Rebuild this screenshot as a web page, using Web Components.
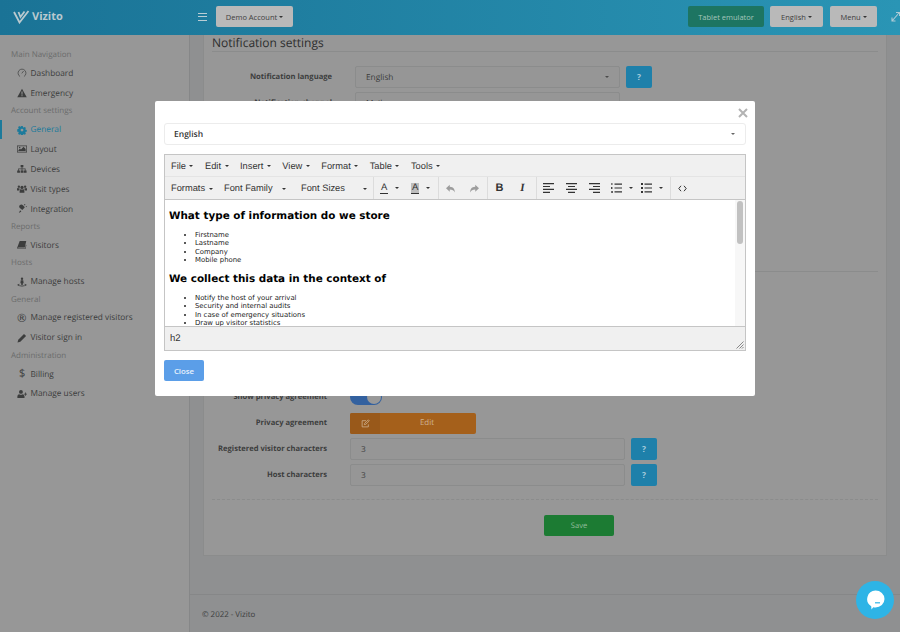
<!DOCTYPE html>
<html lang="en">
<head>
<meta charset="utf-8">
<title>Vizito - Notification settings</title>
<style>
  html, body { margin: 0; height: 100%; overflow: hidden; background: #8f9091; }
  body { font-family: "Open Sans", "Liberation Sans", sans-serif; text-rendering: geometricPrecision; }
</style>
</head>
<body>
<vz-app>
  <vz-topbar slot="top"></vz-topbar>
  <vz-sidebar slot="side">
    <vz-nav-head>Main Navigation</vz-nav-head>
    <vz-nav-item icon="gauge">Dashboard</vz-nav-item>
    <vz-nav-item icon="warning">Emergency</vz-nav-item>
    <vz-nav-head>Account settings</vz-nav-head>
    <vz-nav-item icon="gear" active>General</vz-nav-item>
    <vz-nav-item icon="image">Layout</vz-nav-item>
    <vz-nav-item icon="sitemap">Devices</vz-nav-item>
    <vz-nav-item icon="users">Visit types</vz-nav-item>
    <vz-nav-item icon="plug">Integration</vz-nav-item>
    <vz-nav-head>Reports</vz-nav-head>
    <vz-nav-item icon="book">Visitors</vz-nav-item>
    <vz-nav-head>Hosts</vz-nav-head>
    <vz-nav-item icon="street">Manage hosts</vz-nav-item>
    <vz-nav-head>General</vz-nav-head>
    <vz-nav-item icon="registered">Manage registered visitors</vz-nav-item>
    <vz-nav-item icon="pencil">Visitor sign in</vz-nav-item>
    <vz-nav-head>Administration</vz-nav-head>
    <vz-nav-item icon="dollar">Billing</vz-nav-item>
    <vz-nav-item icon="userplus">Manage users</vz-nav-item>
  </vz-sidebar>
  <vz-settings slot="main"></vz-settings>
</vz-app>

<vz-modal>
  <vz-select slot="head">English</vz-select>
  <vz-editor></vz-editor>
</vz-modal>
<vz-chat></vz-chat>

<script>
// fontawesome-ish glyphs, all on a 16 box
const ICONS = {
  gauge: '<path d="M4.9 13.6A6.3 6.3 0 1 1 11.1 13.6" fill="none" stroke="currentColor" stroke-width="1.1"/><path d="M7.6 8.6 10.6 4.8" fill="none" stroke="currentColor" stroke-width="1.1"/>',
  warning: '<path fill-rule="evenodd" d="M8 1.2 15.6 14.6H.4zM7.1 5.6l.2 5h1.4l.2-5zM7.1 11.4v1.7h1.8v-1.7z"/>',
  gear: '<path fill-rule="evenodd" d="M6.6 1h2.8l.4 2 1.4.6 1.8-1.1 2 2-1.1 1.8.6 1.4 2 .4v2.8l-2 .4-.6 1.4 1.1 1.8-2 2-1.8-1.1-1.4.6-.4 2H6.6l-.4-2-1.4-.6-1.8 1.1-2-2 1.1-1.8-.6-1.4-2-.4V6.700l2-.4.6-1.400-1.100-1.800 2-2 1.800 1.100 1.400-.6zM8 5.600a2.500 2.500 0 1 0 0 5 2.500 2.500 0 0 0 0-5z" transform="translate(.8 .8) scale(.9)"/>',
  image: '<path fill-rule="evenodd" d="M0 2.500h16v11H0zM1.100 3.600v8.800h13.800V3.600z"/><path d="M2.200 11.300V9.800l2.600-2.600 1.500 1.500 4.200-4.200 3.300 3.300v3.500z"/><circle cx="4.300" cy="5.600" r="1.200"/>',
  sitemap: '<path d="M5.800 1.500h4.400v3.600H8.600v2.200h5.100v3h1.600v3.700h-4.400v-3.700h1.600V8.500H8.600v1.800h1.600v3.700H5.800v-3.700h1.600V8.500H3.100v1.800h1.600v3.700H.3v-3.700h1.600v-3h5.500V5.100H5.800z"/>',
  users: '<circle cx="8" cy="5.400" r="2.600"/><circle cx="3" cy="4.200" r="1.900"/><circle cx="13" cy="4.200" r="1.900"/><path d="M4.200 14v-3.200c0-1.800 1.100-2.600 2-2.600.5.3 1.100.5 1.800.5s1.300-.2 1.800-.5c.9 0 2 .8 2 2.600V14z"/><path d="M0 10.400V8c0-1.100.6-1.800 1.500-1.800.4.300.9.500 1.500.500h.6c.2.700.6 1.300 1 1.700-1 .4-1.500 1.300-1.500 2zM16 10.400V8c0-1.100-.6-1.800-1.500-1.800-.4.300-.9.500-1.500.500h-.6c-.2.700-.6 1.300-1 1.700 1 .4 1.500 1.300 1.500 2z"/>',
  plug: '<path d="M4.500 6.500a3 3 0 0 1 5-4.500L12.500 5l-4 4.500z"/><path d="M3 14.500 5 10l2 2z"/><path d="M11 1l1.500-1 1 1-1 1.500zM14 4l1-1 1 1-1.500 1z"/>',
  book: '<path d="M4.300 1.500h10.500l-2.400 10.300H2.500c-.6 0-1 .3-1 .8s.4.900 1 .9h10.400l1.300-6 .9.500-1.500 6.500H2.300C1 14.500.1 13.500.4 12.100z"/>',
  street: '<circle cx="8" cy="2.700" r="1.900"/><path d="M6 5.200h4l.6 4.700H9.400l-.3 3.400H6.900l-.3-3.400H5.400z"/><path d="M4 10.900c-2 .4-3.300 1.100-3.300 2 0 1.300 3.300 2.100 7.300 2.100s7.300-.8 7.300-2.100c0-.9-1.300-1.600-3.300-2v1.100c1 .2 1.600.5 1.600.9 0 .6-2.500 1-5.600 1s-5.600-.4-5.600-1c0-.4.600-.7 1.600-.9z"/>',
  pencil: '<path d="M11.200 1.500 14.500 4.800 5.300 14 .8 15.200 2 10.700z"/>',
  userplus: '<circle cx="6.300" cy="4.600" r="3.100"/><path d="M.6 14.300v-2.200c0-2.200 1.200-3.800 2.900-3.800.8.600 1.800.900 2.800.900s2-.3 2.800-.9c1.700 0 2.900 1.600 2.900 3.800v2.200z"/><path d="M13 5.400h1.300v2h1.700v1.300h-1.700v2H13v-2h-1.900V7.400H13z"/>',
};

class VzApp extends HTMLElement {
  connectedCallback() {
    this.attachShadow({ mode: 'open' }).innerHTML = `
      <style>
        :host { display: grid; grid-template-columns: 190px 1fr; grid-template-rows: 35px 1fr; height: 632px; overflow: hidden; }
        .top { grid-column: 1 / 3; }
        .side { border-right: 1px solid #868788; overflow: hidden; }
        .main { overflow: hidden; }
      </style>
      <div class="top"><slot name="top"></slot></div>
      <div class="side"><slot name="side"></slot></div>
      <div class="main"><slot name="main"></slot></div>
    `;
  }
}

class VzTopbar extends HTMLElement {
  connectedCallback() {
    this.attachShadow({ mode: 'open' }).innerHTML = `
      <style>
        :host { display: flex; align-items: center; height: 35px; box-sizing: border-box; padding: 0 0 2px 13px;
          background: linear-gradient(90deg, #1a7396, #2a95b5); font-size: 7.500px; color: #3f4040; }
        .logo { display: flex; align-items: center; gap: 2px; width: 185px; color: #b9c9cf; font-weight: 700; font-size: 11px; }
        .logo svg { display: block; }
        .burger { width: 9px; height: 8px; margin-right: 9px; border-top: 1px solid #b9cdd5; border-bottom: 1px solid #b9cdd5; box-sizing: border-box; }
        .burger i { display: block; height: 1px; margin-top: 2.500px; background: #b9cdd5; }
        button { font: inherit; border: 0; border-radius: 2px; height: 21px; background: #b9b9b9; color: #3f4040; padding: 0; display: flex; align-items: center; justify-content: center; gap: 2px; }
        button.caret::after { content: ""; border: 2.500px solid transparent; border-top-color: #333; border-bottom: 0; }
        .demo { width: 77px; }
        .tablet { width: 76px; margin-left: auto; background: #1d7562; color: #a6c6bb; }
        .lang { width: 53px; margin-left: 6px; }
        .menu { width: 47px; margin-left: 7px; }
        .expand { margin-left: 14px; color: #aecbd6; display: block; flex: none; }
      </style>
      <div class="logo">
        <svg width="17" height="14" viewBox="0 0 17 14" fill="none" stroke="currentColor" stroke-width="1.800"><path d="M1 2 6.500 12.500 15.500 1"/><path d="M5.500 2 7.500 7 11.500 1.500"/></svg>
        <span>Vizito</span>
      </div>
      <div class="burger"><i></i></div>
      <button class="demo caret">Demo Account</button>
      <button class="tablet">Tablet emulator</button>
      <button class="lang caret">English</button>
      <button class="menu caret">Menu</button>
      <svg class="expand" width="9" height="11" viewBox="0 0 9 11" fill="none" stroke="currentColor" stroke-width="1.100"><path d="M1 10 8 2M5 1.500h3.500V5M1 6.500V10h3.500"/></svg>
    `;
  }
}

class VzSidebar extends HTMLElement {
  connectedCallback() {
    this.attachShadow({ mode: 'open' }).innerHTML = `
      <style>
        :host { display: flex; flex-direction: column; height: 100%; box-sizing: border-box; padding-top: 12px; background: #979797; }
      </style>
      <slot></slot>
    `;
  }
}

class VzNavHead extends HTMLElement {
  connectedCallback() {
    this.attachShadow({ mode: 'open' }).innerHTML = `
      <style>
        :host { display: block; height: 16.400px; line-height: 16.400px; padding-left: 11px; font-size: 8px; color: #6b6c6c; }
      </style>
      <slot></slot>
    `;
  }
}

class VzNavItem extends HTMLElement {
  connectedCallback() {
    const name = this.getAttribute('icon');
    let glyph;
    if (name === 'dollar') glyph = '<span class="g dollar">$</span>';
    else if (name === 'registered') glyph = '<span class="g reg">®</span>';
    else glyph = `<svg width="10" height="10" viewBox="0 0 16 16" fill="currentColor">${ICONS[name]}</svg>`;
    this.attachShadow({ mode: 'open' }).innerHTML = `
      <style>
        :host { display: flex; align-items: center; height: 19.900px; padding-left: 17px; box-sizing: border-box; font-size: 8.300px; color: #3c3d3d; position: relative; }
        :host([active]) { color: #1c7a9b; }
        :host([active])::before { content: ""; position: absolute; left: 0; top: 0; bottom: 0; width: 2px; background: #1c7a9b; }
        .i { width: 13.500px; flex: none; display: flex; }
        .g { line-height: 10px; }
        .dollar { font-size: 11px; padding-left: 2px; }
        .reg { font-family: "DejaVu Sans", sans-serif; font-size: 11.500px; margin-left: -1px; }
      </style>
      <span class="i">${glyph}</span><slot></slot>
    `;
  }
}

class VzField extends HTMLElement {
  connectedCallback() {
    const help = this.hasAttribute('help') ? '<span class="help">?</span>' : '';
    this.attachShadow({ mode: 'open' }).innerHTML = `
      <style>
        :host { display: flex; align-items: center; height: 26px; font-size: 8.300px; color: #3c3d3d; }
        label { width: var(--label-w, 115px); font-size: 7.600px; font-weight: 700; margin-right: 23px; flex: none; white-space: nowrap; display: flex; justify-content: flex-end; }
        .ctl { width: var(--ctl-w, 275px); height: 22px; box-sizing: border-box; border: 1px solid #8b8c8c; border-radius: 2px;
          display: flex; align-items: center; padding-left: 10px; position: relative; background: #969696; }
        :host([select]) .ctl::after { content: ""; position: absolute; right: 10px; top: 9px; border: 2.500px solid transparent; border-top-color: #4b4b4b; border-bottom: 0; }
        :host([bare]) .ctl { border: 0; padding: 0; background: none; }
        .help { margin-left: 6px; width: 26px; height: 22px; border-radius: 2px; background: #1e80aa; color: #a7ccdc; font-weight: 700; display: flex; align-items: center; justify-content: center; }
      </style>
      <label>${this.getAttribute('label')}</label>
      <div class="ctl"><slot></slot></div>
      ${help}
    `;
  }
}

class VzSettings extends HTMLElement {
  connectedCallback() {
    this.attachShadow({ mode: 'open' }).innerHTML = `
      <style>
        :host { display: block; padding-left: 13px; height: 597px; }
        .card { width: 684px; height: 521px; box-sizing: border-box; padding: 0 8px; background: #979797; border: 1px solid #8b8c8c; border-top: 0; }
        h2 { margin: 0; height: 16px; font-size: 12px; line-height: 15px; font-weight: 400; color: #2d2e2e; border-bottom: 1px solid #8b8c8c; }
        .lang { --label-w: 120px; --ctl-w: 265px; margin-top: 12px; }
        .lang-next { --label-w: 120px; --ctl-w: 265px; }
        .sep { margin-top: 155px; border-top: 1px solid #8b8c8c; height: 112px; }
        .toggle { width: 32px; height: 16px; border-radius: 8px; background: #33619f; position: relative; }
        .toggle::after { content: ""; position: absolute; right: 1px; top: 1px; width: 14px; height: 14px; border-radius: 50%; background: #999; }
        .edit { width: 126px; height: 21px; border-radius: 2px; background: #a5601b; color: #cfb393; display: flex; align-items: center; font-size: 7.900px; }
        .edit span:first-child { width: 30px; height: 100%; background: #99591a; border-radius: 2px 0 0 2px; display: flex; align-items: center; justify-content: center; }
        .edit span:last-child { flex: 1; text-align: center; padding-right: 30px; padding-left: 28px; }
        .dash { margin-top: 11px; border-top: 1px dashed #8b8c8c; }
        .actions { display: flex; justify-content: center; padding: 15px 0 0 68px; }
        .save { width: 70px; height: 21px; border-radius: 2px; background: #1c7b33; color: #93bb9d; font-size: 7.600px; display: flex; align-items: center; justify-content: center; }
        footer { margin: 38px -1px 0 -13px; border-top: 1px solid #868788; padding: 15px 0 0 12px; font-size: 7.900px; color: #3c3d3d; }
      </style>
      <div class="card">
        <h2>Notification settings</h2>
        <vz-field class="lang" label="Notification language" select help>English</vz-field>
        <vz-field class="lang-next" label="Notification channel" select>Mail</vz-field>
        <div class="sep"></div>
        <vz-field label="Show privacy agreement" bare><div class="toggle"></div></vz-field>
        <vz-field label="Privacy agreement" bare>
          <div class="edit"><span><svg width="9" height="9" viewBox="0 0 16 16" fill="none" stroke="currentColor" stroke-width="1.400"><path d="M13 9.500V14H2V3h7"/><path d="M6 10l.6-2.400L13 1.500l1.800 1.800L8.400 9.500z"/></svg></span><span>Edit</span></div>
        </vz-field>
        <vz-field label="Registered visitor characters" help>3</vz-field>
        <vz-field label="Host characters" help>3</vz-field>
        <div class="dash"></div>
        <div class="actions"><div class="save">Save</div></div>
      </div>
      <footer>© 2022 - Vizito</footer>
    `;
  }
}

class VzSelect extends HTMLElement {
  connectedCallback() {
    this.attachShadow({ mode: 'open' }).innerHTML = `
      <style>
        :host { display: flex; align-items: center; height: 22px; box-sizing: border-box; padding-left: 9px; border: 1px solid #ececec; border-radius: 3px;
          font-size: 8.500px; font-weight: 600; color: #333; position: relative; }
        :host::after { content: ""; position: absolute; right: 10px; top: 9px; border: 2.500px solid transparent; border-top-color: #666; border-bottom: 0; }
      </style>
      <slot></slot>
    `;
  }
}

class VzModal extends HTMLElement {
  connectedCallback() {
    this.attachShadow({ mode: 'open' }).innerHTML = `
      <style>
        :host { display: block; position: fixed; left: 155px; top: 101px; width: 600px; height: 295px; box-sizing: border-box; padding: 22px 9px 0; background: #fff; border-radius: 2px; }
        .x { position: absolute; right: 7px; top: 7px; width: 10px; height: 10px; color: #b3b3b3; display: block; }
        .body { margin-top: 9px; }
        button { margin-top: 9px; display: block; width: 40px; height: 21px; border: 0; border-radius: 2px; background: #5b9ee8; color: #e8f1fc; font: 600 7.800px "Open Sans", sans-serif; padding: 0; }
      </style>
      <svg class="x" viewBox="0 0 10 10" fill="none" stroke="currentColor" stroke-width="2"><path d="M1 1 9 9M9 1 1 9"/></svg>
      <slot name="head"></slot>
      <div class="body"><slot></slot></div>
      <button>Close</button>
    `;
  }
}

class VzEditor extends HTMLElement {
  connectedCallback() {
    const menu = ['File', 'Edit', 'Insert', 'View', 'Format', 'Table', 'Tools'];
    this.attachShadow({ mode: 'open' }).innerHTML = `
      <style>
        :host { display: block; width: 582px; height: 197px; box-sizing: border-box; border: 1px solid #c5c5c5; font: 9.300px "Liberation Sans", Arial, sans-serif; color: #333; }
        .bar { display: flex; align-items: center; background: #f0f0f0; }
        .menubar { height: 22px; padding-left: 6px; gap: 11.500px; border-bottom: 1px solid #e4e4e4; box-sizing: border-box; }
        .toolbar { height: 23px; padding-left: 6px; border-bottom: 1px solid #c5c5c5; box-sizing: border-box; }
        .m { display: flex; align-items: center; gap: 3.500px; }
        .m::after, .c::after { content: ""; border: 2.200px solid transparent; border-top-color: #333; border-bottom: 0; margin-top: 1px; }
        .c { display: flex; align-items: center; gap: 4px; }
        .fmt { width: 53px; }
        .fam { width: 77px; justify-content: space-between; padding-right: 15px; box-sizing: border-box; }
        .siz { width: 72px; justify-content: space-between; padding-right: 6px; box-sizing: border-box; }
        .grp { display: flex; align-items: center; height: 22px; border-left: 1px solid #dcdcdc; box-sizing: border-box; flex: none; }
        .g1 { width: 65px; padding-left: 6px; }
        .g2 { width: 49px; }
        .g3 { width: 48.500px; }
        .g4 { width: 134px; }
        .b { width: 23px; flex: none; display: flex; align-items: center; justify-content: center; color: #333; }
        .b.off { color: #9d9d9d; }
        .txt { font: 700 11px "Liberation Sans", sans-serif; }
        .it { font: italic 700 11px "Liberation Serif", serif; }
        .ca { font-size: 9.500px; line-height: 10px; border-bottom: 1.500px solid #333; padding: 0 1px; }
        .ca.hi { background: #bdbdbd; }
        .split { display: flex; align-items: center; justify-content: flex-start; gap: 7px; width: 31px; }
        .g4 .split { width: 30px; padding-left: 5px; box-sizing: border-box; }
        .split::after { content: ""; border: 2.200px solid transparent; border-top-color: #333; border-bottom: 0; }
        .content { position: relative; height: 127px; overflow: hidden; background: #fff; color: #000; font-family: "DejaVu Sans", Verdana, sans-serif; padding: 1px 0 0 4px; box-sizing: border-box; border-bottom: 1px solid #c5c5c5; }
        h2 { font-size: 10.400px; line-height: 14px; margin: 8px 0; font-weight: 700; }
        ul { margin: 0; padding-left: 26px; font-size: 6.900px; line-height: 8.300px; color: #222; }
        .scroll { position: absolute; right: 0; top: 0; bottom: 0; width: 10px; background: #f7f7f7; }
        .thumb { position: absolute; left: 2px; top: 1px; width: 6px; height: 43px; border-radius: 3px; background: #c1c1c1; }
        .status { height: 23px; background: #f0f0f0; display: flex; align-items: center; padding-left: 5px; font-size: 9.500px; position: relative; }
        .grip { position: absolute; right: 1px; bottom: 1px; display: block; }
      </style>
      <div class="bar menubar">${menu.map(m => `<span class="m">${m}</span>`).join('')}</div>
      <div class="bar toolbar">
        <span class="c fmt">Formats</span>
        <span class="c fam">Font Family</span>
        <span class="c siz">Font Sizes</span>
        <span class="grp g1">
          <span class="b split"><span class="ca">A</span></span>
          <span class="b split" style="width:26px"><span class="ca hi">A</span></span>
        </span>
        <span class="grp g2">
          <span class="b off"><svg width="10" height="9" viewBox="0 0 16 14" fill="currentColor"><path d="M6 1 0 6.500 6 12V8.500c4 0 6.500 1 8 5 .5-5-2-9.500-8-9.500z"/></svg></span>
          <span class="b off"><svg width="10" height="9" viewBox="0 0 16 14" fill="currentColor"><path d="M10 1l6 5.500L10 12V8.500c-4 0-6.500 1-8 5-.5-5 2-9.500 8-9.500z"/></svg></span>
        </span>
        <span class="grp g3">
          <span class="b txt">B</span>
          <span class="b it">I</span>
        </span>
        <span class="grp g4">
          <span class="b"><svg width="11" height="10" viewBox="0 0 11 10" fill="currentColor"><path d="M0 0h11v1.200H0zM0 2.900h7v1.200H0zM0 5.800h11V7H0zM0 8.700h7v1.200H0z"/></svg></span>
          <span class="b"><svg width="11" height="10" viewBox="0 0 11 10" fill="currentColor"><path d="M0 0h11v1.200H0zM2 2.900h7v1.200H2zM0 5.800h11V7H0zM2 8.700h7v1.200H2z"/></svg></span>
          <span class="b"><svg width="11" height="10" viewBox="0 0 11 10" fill="currentColor"><path d="M0 0h11v1.200H0zM4 2.900h7v1.200H4zM0 5.800h11V7H0zM4 8.700h7v1.200H4z"/></svg></span>
          <span class="b split"><svg width="11" height="10" viewBox="0 0 11 10" fill="currentColor"><path d="M3.500 .5h7.500v1.200H3.500zM3.500 4.400h7.500v1.200H3.500zM3.500 8.300h7.500v1.200H3.500zM.4 0h1v2H.4zM0 4h1.800v.6H.8v.8h1V6H0zM0 8h1.800v2H0v-.5h1.100v-.3H.3v-.5h.8v-.2H0z"/></svg></span>
          <span class="b split"><svg width="11" height="10" viewBox="0 0 11 10" fill="currentColor"><path d="M3.500 .5h7.500v1.200H3.500zM3.500 4.400h7.500v1.200H3.500zM3.500 8.300h7.500v1.200H3.500zM0 0h2v2H0zM0 4h2v2H0zM0 8h2v2H0z"/></svg></span>
        </span>
        <span class="grp">
          <span class="b"><svg width="9" height="7" viewBox="0 0 9 7" fill="none" stroke="currentColor" stroke-width="1"><path d="M3 .8.800 3.500 3 6.200M6 .8 8.200 3.500 6 6.200"/></svg></span>
        </span>
      </div>
      <div class="content">
        <h2>What type of information do we store</h2>
        <ul><li>Firstname</li><li>Lastname</li><li>Company</li><li>Mobile phone</li></ul>
        <h2>We collect this data in the context of</h2>
        <ul><li>Notify the host of your arrival</li><li>Security and internal audits</li><li>In case of emergency situations</li><li>Draw up visitor statistics</li></ul>
        <div class="scroll"><div class="thumb"></div></div>
      </div>
      <div class="status">h2
        <svg class="grip" width="8" height="8" viewBox="0 0 8 8" stroke="#888" stroke-width="1"><path d="M7.500 .5 .5 7.500M7.500 3.500 3.500 7.500M7.500 6 6 7.500"/></svg>
      </div>
    `;
  }
}

class VzChat extends HTMLElement {
  connectedCallback() {
    this.attachShadow({ mode: 'open' }).innerHTML = `
      <style>
        :host { display: flex; align-items: center; justify-content: center; position: fixed; left: 856px; top: 581px; width: 38px; height: 38px; border-radius: 50%; background: #2eb4e6; }
      </style>
      <svg width="19" height="20" viewBox="0 0 19 20"><path fill="#fff" d="M9.500 .5a9 8.500 0 0 1 0 17c-.8 0-1.600-.1-2.300-.3L5.500 19.500l-.3-3.300A8.500 8.500 0 0 1 9.500 .5z"/><path d="M9 12.800h5" stroke="#2eb4e6" stroke-width="1.200"/></svg>
    `;
  }
}

customElements.define('vz-app', VzApp);
customElements.define('vz-topbar', VzTopbar);
customElements.define('vz-sidebar', VzSidebar);
customElements.define('vz-nav-head', VzNavHead);
customElements.define('vz-nav-item', VzNavItem);
customElements.define('vz-field', VzField);
customElements.define('vz-settings', VzSettings);
customElements.define('vz-select', VzSelect);
customElements.define('vz-modal', VzModal);
customElements.define('vz-editor', VzEditor);
customElements.define('vz-chat', VzChat);
</script>
</body>
</html>
